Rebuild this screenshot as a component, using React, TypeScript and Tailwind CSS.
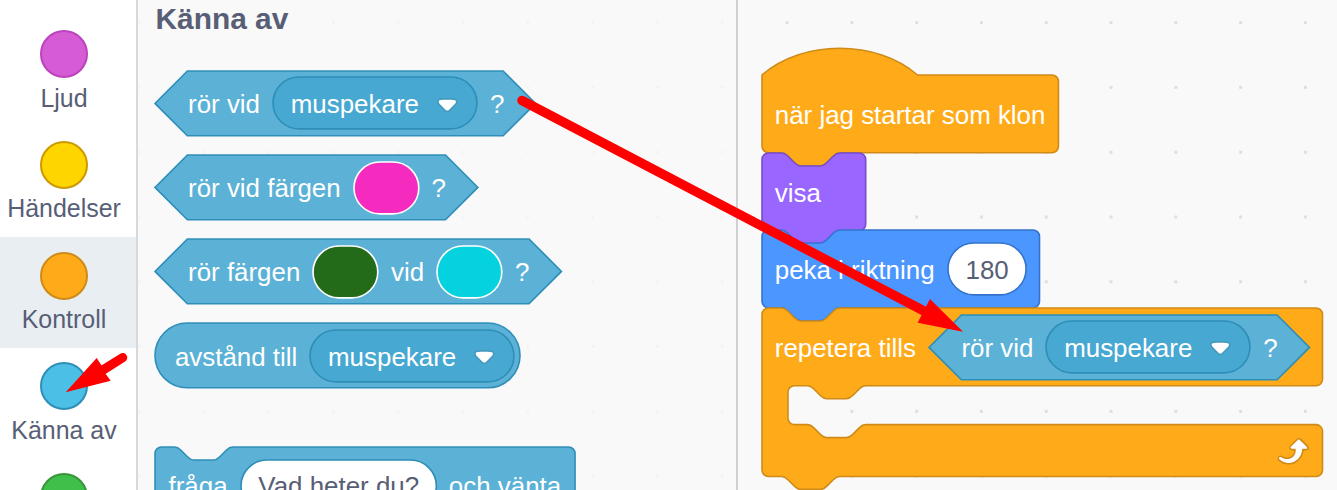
import type { ReactNode } from "react";

// One block unit, in CSS pixels.
const U = 1.62;

const NOTCH = "c 2,0 3,1 4,2 l 4,4 c 1,1 2,2 4,2 h 12 c 2,0 3,-1 4,-2 l 4,-4 c 1,-1 2,-2 4,-2";
const TAB = "c -2,0 -3,1 -4,2 l -4,4 c -1,1 -2,2 -4,2 h -12 c -2,0 -3,-1 -4,-2 l -4,-4 c -1,-1 -2,-2 -4,-2";
const LEFT_CORNER = "H 4 a 4,4 0 0,1 -4,-4 z";

const stackPath = (w: number) =>
  `M 0,4 A 4,4 0 0,1 4,0 H 12 ${NOTCH} H ${w - 4} a 4,4 0 0,1 4,4 v 40 a 4,4 0 0,1 -4,4 H 48 ${TAB} ${LEFT_CORNER}`;
const hatPath = (w: number) =>
  `M 0,0 c 25,-22 71,-22 96,0 H ${w - 4} a 4,4 0 0,1 4,4 v 40 a 4,4 0 0,1 -4,4 H 48 ${TAB} ${LEFT_CORNER}`;
const loopPath = (w: number) =>
  `M 0,4 A 4,4 0 0,1 4,0 H 12 ${NOTCH} H ${w - 4} a 4,4 0 0,1 4,4 v 40 a 4,4 0 0,1 -4,4 H 64 ${TAB} H 20 a 4,4 0 0,0 -4,4 v 16 a 4,4 0 0,0 4,4 H 28 ${NOTCH} H ${w - 4} a 4,4 0 0,1 4,4 v 24 a 4,4 0 0,1 -4,4 H 48 ${TAB} ${LEFT_CORNER}`;
const hexPath = (w: number) => `M 20,0 H ${w - 20} L ${w},20 L ${w - 20},40 H 20 L 0,20 z`;
const pillPath = (w: number, h: number) =>
  `M ${h / 2},0 H ${w - h / 2} a ${h / 2},${h / 2} 0 0,1 0,${h} H ${h / 2} a ${h / 2},${h / 2} 0 0,1 0,${-h} z`;

const SENSING = { fill: "#5CB1D6", stroke: "#2E8EB8" };
const CONTROL = { fill: "#FFAB19", stroke: "#CF8B17" };
const LOOKS = { fill: "#9966FF", stroke: "#774DCB" };
const MOTION = { fill: "#4C97FF", stroke: "#3373CC" };

type Paint = { fill: string; stroke: string };

function Block({
  w,
  h,
  d,
  paint,
  className = "",
  children,
}: {
  w: number;
  h: number;
  d: string;
  paint: Paint;
  className?: string;
  children?: ReactNode;
}) {
  return (
    <div className="grid shrink-0" style={{ width: w * U, height: h * U }}>
      <svg
        className="overflow-visible [grid-area:1/1]"
        width={w * U}
        height={h * U}
        viewBox={`0 0 ${w} ${h}`}
      >
        <path d={d} fill={paint.fill} stroke={paint.stroke} strokeWidth="1" />
      </svg>
      <div className={`flex min-w-0 [grid-area:1/1] ${className}`}>{children}</div>
    </div>
  );
}

function Label({ children }: { children: ReactNode }) {
  return <span className="pt-[1.5px]">{children}</span>;
}

function Dropdown() {
  return (
    <Block
      w={125.9}
      h={32}
      d={pillPath(125.9, 32)}
      paint={{ fill: "#47A8D1", stroke: "#2E8EB8" }}
      className="items-center justify-between pl-[17.8px] pr-[19.3px]"
    >
      <Label>muspekare</Label>
      <svg className="mt-[3px]" width="20.6" height="14.24" viewBox="0 0 12.71 8.79">
        <path
          fill="#231f20"
          opacity="0.1"
          d="M12.71,2.44A2.41,2.41,0,0,1,12,4.16L8.08,8.08a2.45,2.45,0,0,1-3.45,0L0.72,4.16A2.42,2.42,0,0,1,0,2.44,2.48,2.48,0,0,1,.71.71C1,0.47,1.43,0,6.36,0S11.75,0.46,12,.71A2.44,2.44,0,0,1,12.71,2.44Z"
        />
        <path
          fill="#fff"
          d="M6.36,7.79a1.43,1.43,0,0,1-1-.42L1.42,3.45a1.44,1.44,0,0,1,0-2c0.56-.56,9.31-0.56,9.87,0a1.44,1.44,0,0,1,0,2L7.37,7.37A1.43,1.43,0,0,1,6.36,7.79Z"
        />
      </svg>
    </Block>
  );
}

function Swatch({ color }: { color: string }) {
  return <Block w={40} h={32} d={pillPath(40, 32)} paint={{ fill: color, stroke: "#fff" }} />;
}

function Input({ w, stroke, children }: { w: number; stroke: string; children: ReactNode }) {
  return (
    <Block
      w={w}
      h={32}
      d={pillPath(w, 32)}
      paint={{ fill: "#fff", stroke }}
      className="items-center justify-center pl-px text-[#575E75]"
    >
      <Label>{children}</Label>
    </Block>
  );
}

function Hex({ w, children }: { w: number; children: ReactNode }) {
  return (
    <Block w={w} h={40} d={hexPath(w)} paint={SENSING} className="items-center gap-[12.96px] pl-[32.6px]">
      {children}
    </Block>
  );
}

function TouchingBlock() {
  return (
    <Hex w={234.9}>
      <Label>rör vid</Label>
      <Dropdown />
      <Label>?</Label>
    </Hex>
  );
}

const CATEGORIES = [
  { name: "Ljud", fill: "#D65CD6", stroke: "#BD42BD" },
  { name: "Händelser", fill: "#FFD500", stroke: "#CC9900" },
  { name: "Kontroll", fill: "#FFAB19", stroke: "#CF8B17", selected: true },
  { name: "Känna av", fill: "#4CBFE6", stroke: "#2E8EB8" },
  { name: "", fill: "#40BF4A", stroke: "#389438" },
];

function Sidebar() {
  return (
    <nav className="flex w-[138px] shrink-0 flex-col border-r-2 border-[#d9d9d9] bg-white pt-[15.5px] text-[24.96px] leading-[30px] text-[#575E75]">
      {CATEGORIES.map((c) => (
        <div
          key={c.fill}
          className={`flex h-[110.7px] shrink-0 flex-col items-center pr-[8px] pt-[14.7px] ${c.selected ? "bg-[#E9EEF2]" : ""}`}
        >
          <svg className="shrink-0" width="48" height="48" viewBox="0 0 48 48">
            <circle cx="24" cy="24" r="23" fill={c.fill} stroke={c.stroke} strokeWidth="2" />
          </svg>
          <span className="mt-[4.6px] whitespace-nowrap">{c.name}</span>
        </div>
      ))}
    </nav>
  );
}

function Palette() {
  return (
    <section className="flex w-[600px] shrink-0 flex-col border-r-2 border-[#d0d0d0] bg-[#f9f9f9]/80 pl-[17.45px]">
      <h2 className="mb-[34.2px] h-[36.6px] shrink-0 pt-[0.8px] text-[29.9px] font-bold leading-[36.4px] text-[#575E75]">
        Känna av
      </h2>
      <div className="flex flex-col gap-[19.44px]">
        <TouchingBlock />
        <Hex w={199.3}>
          <Label>rör vid färgen</Label>
          <Swatch color="#F52BBF" />
          <Label>?</Label>
        </Hex>
        <Hex w={250.9}>
          <Label>rör färgen</Label>
          <Swatch color="#246B19" />
          <Label>vid</Label>
          <Swatch color="#05D2DF" />
          <Label>?</Label>
        </Hex>
        <Block
          w={225.3}
          h={40}
          d={pillPath(225.3, 40)}
          paint={SENSING}
          className="items-center gap-[12.96px] pl-[19.44px]"
        >
          <Label>avstånd till</Label>
          <Dropdown />
        </Block>
      </div>
      <div className="mt-[58.3px]">
        <Block w={259.3} h={48} d={stackPath(259.3)} paint={SENSING} className="items-center gap-[12.96px] pl-[13.1px]">
          <Label>fråga</Label>
          <Input w={120.6} stroke="#2E8EB8">
            Vad heter du?
          </Input>
          <Label>och vänta</Label>
        </Block>
      </div>
    </section>
  );
}

function RepeatIcon() {
  return (
    <svg width="38.88" height="38.88" viewBox="0 0 24 24">
      <path
        fill="#CF8B17"
        d="M23.3,11c-0.3,0.6-0.9,1-1.5,1h-1.6c-0.1,1.3-0.5,2.5-1.1,3.6c-0.9,1.7-2.3,3.2-4.1,4.1c-1.7,0.9-3.6,1.2-5.5,0.9c-1.8-0.3-3.5-1.1-4.9-2.3c-0.7-0.7-0.7-1.9,0-2.6c0.6-0.6,1.6-0.7,2.3-0.2H7c0.9,0.6,1.9,0.9,2.9,0.9s1.9-0.3,2.7-0.9c1.1-0.8,1.8-2.1,1.8-3.5h-1.5c-0.9,0-1.7-0.7-1.7-1.7c0-0.4,0.2-0.9,0.5-1.2l4.4-4.4c0.7-0.6,1.7-0.6,2.4,0L23,9.2C23.5,9.7,23.6,10.4,23.3,11z"
      />
      <path
        fill="#fff"
        d="M21.8,11h-2.6c0,1.5-0.3,2.9-1,4.2c-0.8,1.6-2.1,2.8-3.7,3.6c-1.5,0.8-3.3,1.1-4.9,0.8c-1.6-0.2-3.2-1-4.4-2.1c-0.4-0.3-0.4-0.9-0.1-1.2c0.3-0.4,0.9-0.4,1.2-0.1l0,0c1,0.7,2.2,1.1,3.4,1.1s2.3-0.3,3.3-1c0.9-0.6,1.6-1.5,2-2.6c0.3-0.9,0.4-1.8,0.2-2.8h-2.4c-0.4,0-0.7-0.3-0.7-0.7c0-0.2,0.1-0.3,0.2-0.4l4.4-4.4c0.3-0.3,0.7-0.3,0.9,0L22,9.8c0.3,0.3,0.4,0.6,0.3,0.9S22,11,21.8,11z"
      />
    </svg>
  );
}

function Script() {
  return (
    <section className="flex flex-col pl-[23.8px] pt-[74.9px]">
      <Block w={183} h={48} d={hatPath(183)} paint={CONTROL} className="items-center pl-[12.96px] pt-[1.4px]">
        <Label>när jag startar som klon</Label>
      </Block>
      <Block w={64} h={48} d={stackPath(64)} paint={LOOKS} className="items-center pl-[12.96px] pt-[2px]">
        <Label>visa</Label>
      </Block>
      <Block w={171.3} h={48} d={stackPath(171.3)} paint={MOTION} className="items-center gap-[12.96px] pl-[12.96px]">
        <Label>peka i riktning</Label>
        <Input w={48.2} stroke="#3373CC">
          180
        </Input>
      </Block>
      <Block w={346} h={104} d={loopPath(346)} paint={CONTROL} className="flex-col justify-between">
        <div className="flex h-[77.76px] items-center gap-[12.96px] pl-[12.96px]">
          <Label>repetera tills</Label>
          <TouchingBlock />
        </div>
        <div className="flex h-[51.84px] items-center justify-end pr-[12.4px]">
          <RepeatIcon />
        </div>
      </Block>
    </section>
  );
}

function Pointers() {
  return (
    <svg className="pointer-events-none absolute inset-0" width="1337" height="490" viewBox="0 0 1337 490">
      <g fill="#f00" stroke="#f00">
        <path d="M522,100.5 L925,311.5" strokeWidth="9.4" strokeLinecap="round" />
        <path d="M963,331.7 L930,299 L917.6,322.8 z" stroke="none" />
        <path d="M122.7,357.6 L103,370" strokeWidth="9.2" strokeLinecap="round" />
        <path d="M65.7,392.3 L96.7,358 L102.5,367 L105,373 L110.7,380.8 z" stroke="none" />
      </g>
    </svg>
  );
}

export default function App() {
  return (
    <div className="relative flex h-[490px] w-[1337px] overflow-hidden whitespace-nowrap bg-[#f9f9f9] bg-[radial-gradient(circle,#dddddd_1.3px,transparent_1.9px)] bg-[length:64.8px_64.8px] bg-[position:41.9px_-9.8px] font-['Liberation_Sans',Arial,sans-serif] text-[25.92px] leading-[30px] text-white">
      <Sidebar />
      <Palette />
      <Script />
      <Pointers />
    </div>
  );
}
